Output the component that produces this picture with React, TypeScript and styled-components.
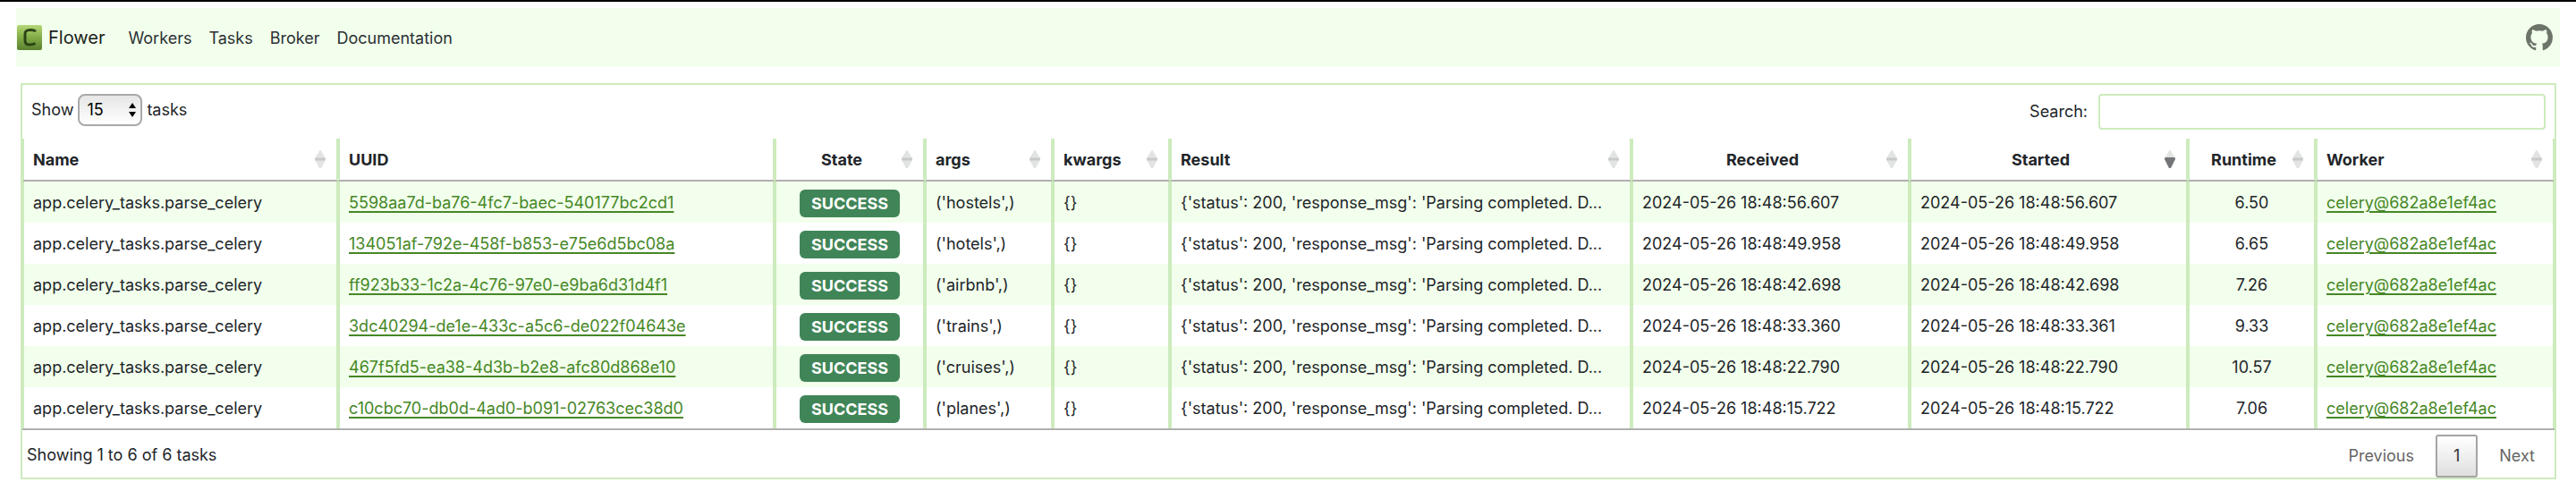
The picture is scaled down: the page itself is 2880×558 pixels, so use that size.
import React from "react";
import styled, { createGlobalStyle, css } from "styled-components";

const GlobalStyle = createGlobalStyle`
  * { box-sizing: border-box; }
  body {
    margin: 0;
    background: #fff;
    color: #212529;
    font: 18px/28px Inter, "Liberation Sans", sans-serif;
  }
  input, select, button { font: inherit; color: inherit; }
`;

const Page = styled.div`
  border-top: 2px solid #000;
  padding: 7px 18px 20px;
`;

const Navbar = styled.nav`
  display: flex;
  align-items: center;
  height: 66px;
  padding: 0 8px 0 1px;
  background: #f2ffec;
`;

const Brand = styled.a`
  display: flex;
  align-items: center;
  gap: 7px;
  margin-right: 26px;
  font-size: 20px;
  color: #1b1e21;
  text-decoration: none;
`;

const NavLinks = styled.div`
  display: flex;
  flex: 1;
  gap: 19px;
  padding-top: 2px;
`;

const NavLink = styled.a`
  color: #2b3035;
  text-decoration: none;
`;

const IconLink = styled.a`
  display: flex;
  color: #6c746a;
`;

const Panel = styled.main`
  margin: 18px 4px 0 5px;
  border: 2px solid #cdebbd;
`;

const Toolbar = styled.div`
  display: flex;
  justify-content: space-between;
  align-items: flex-start;
  padding: 10px;
`;

const LengthLabel = styled.label`
  display: flex;
  align-items: center;
  gap: 5px;
  height: 36px;
`;

const SelectBox = styled.span`
  display: flex;
  position: relative;
`;

const LengthSelect = styled.select`
  appearance: none;
  width: 72px;
  height: 36px;
  padding: 0 8px;
  border: 2px solid #a9a9a9;
  border-radius: 8px;
  background: linear-gradient(#e6e6e6, #fff);
  color: #000;
`;

const SelectArrows = styled.svg`
  position: absolute;
  right: 7px;
  top: 10px;
  pointer-events: none;
`;

const SearchLabel = styled.label`
  display: flex;
  align-items: center;
  gap: 12px;
`;

const SearchInput = styled.input`
  width: 500px;
  height: 40px;
  padding: 4px 8px;
  border: 2px solid #cdebbd;
  border-radius: 4px;
  background: #fff;
`;

const Table = styled.table`
  width: 100%;
  table-layout: fixed;
  border-spacing: 0;
  border-bottom: 2px solid #b0b0b0;
`;

const cell = css<{ $center?: boolean }>`
  padding: 2px 10px 0;
  border: solid #cdebbd;
  border-width: 0 2px;
  text-align: ${(p) => (p.$center ? "center" : "left")};
  white-space: nowrap;
  overflow: hidden;
  text-overflow: ellipsis;
`;

const HeadCell = styled.th<{ $center?: boolean }>`
  ${cell}
  height: 48px;
  border-bottom: 2px solid #b0b0b0;
  font-weight: 700;
`;

const HeadContent = styled.div`
  display: flex;
  align-items: center;
`;

const HeadText = styled.span`
  flex: 1;
`;

const SortMark = styled.svg`
  margin: 0 2px 2px 4px;
`;

const Row = styled.tr`
  &:nth-child(odd) { background: #f2ffec; }
`;

const Cell = styled.td<{ $center?: boolean }>`
  ${cell}
  height: 46px;
`;

const CellLink = styled.a`
  color: #468726;
  text-decoration: underline;
  text-decoration-thickness: 2px;
  text-underline-offset: 3px;
`;

const Badge = styled.span`
  display: inline-block;
  padding: 0 13px;
  border-radius: 6px;
  background: #408558;
  color: #fff;
  font-weight: 700;
  line-height: 31px;
  vertical-align: top;
`;

const Footer = styled.div`
  display: flex;
  justify-content: space-between;
  padding: 5px 2px 0 5px;
`;

const Info = styled.div`
  line-height: 46px;
`;

const Pager = styled.div`
  display: flex;
  gap: 4px;
`;

const PageButton = styled.button<{ $current?: boolean }>`
  height: 48px;
  padding: 0 18px;
  border: 2px solid ${(p) => (p.$current ? "#a5a5a5" : "transparent")};
  border-radius: 3px;
  background: ${(p) => (p.$current ? "linear-gradient(#fff, #dfdfdf)" : "none")};
  color: ${(p) => (p.$current ? "#333" : "#666")};
`;

type Column = { label: string; width: number; center?: boolean; sort?: "both" | "desc" };

const columns: Column[] = [
  { label: "Name", width: 353, sort: "both" },
  { label: "UUID", width: 488 },
  { label: "State", width: 168, center: true, sort: "both" },
  { label: "args", width: 143, sort: "both" },
  { label: "kwargs", width: 131, sort: "both" },
  { label: "Result", width: 516, sort: "both" },
  { label: "Received", width: 311, center: true, sort: "both" },
  { label: "Started", width: 311, center: true, sort: "desc" },
  { label: "Runtime", width: 143, center: true, sort: "both" },
  { label: "Worker", width: 267, sort: "both" },
];

const tasks = [
  ["5598aa7d-ba76-4fc7-baec-540177bc2cd1", "hostels", "18:48:56.607", "18:48:56.607", "6.50"],
  ["134051af-792e-458f-b853-e75e6d5bc08a", "hotels", "18:48:49.958", "18:48:49.958", "6.65"],
  ["ff923b33-1c2a-4c76-97e0-e9ba6d31d4f1", "airbnb", "18:48:42.698", "18:48:42.698", "7.26"],
  ["3dc40294-de1e-433c-a5c6-de022f04643e", "trains", "18:48:33.360", "18:48:33.361", "9.33"],
  ["467f5fd5-ea38-4d3b-b2e8-afc80d868e10", "cruises", "18:48:22.790", "18:48:22.790", "10.57"],
  ["c10cbc70-db0d-4ad0-b091-02763cec38d0", "planes", "18:48:15.722", "18:48:15.722", "7.06"],
];

const SortIcon = ({ kind }: { kind: "both" | "desc" }) => (
  <SortMark width="12" height="20" viewBox="0 0 12 20" aria-hidden="true">
    <path d="M5.500 0h1L12 9v2H0V9z" fill="#e2e3e3" />
    {kind === "both" ? (
      <>
        <path d="M0 9h12v2L7 20H5L0 11z" fill="#e2e3e3" />
        <path d="M.5 8.500h11L12 10l-.5 1.500H.5L0 10z" fill="#c9caca" />
      </>
    ) : (
      <path d="M.5 8h11l.5 2-5 10H5L0 10z" fill="#737578" />
    )}
  </SortMark>
);

const Logo = () => (
  <svg width="28" height="28" viewBox="0 0 28 28" aria-hidden="true">
    <defs>
      <linearGradient id="leaf" x1="0" y1="0" x2="0" y2="1">
        <stop offset="0" stopColor="#b5d878" />
        <stop offset="0.45" stopColor="#86b04a" />
        <stop offset="1" stopColor="#5a8030" />
      </linearGradient>
    </defs>
    <rect width="28" height="28" rx="2" fill="url(#leaf)" />
    <path
      d="M20.500 7.500C20 5.800 18.500 5.500 15 5.500c-4.500 0-6 1-6 4.500v7c0 3.500 1.500 5 4.500 5 3 0 5-.3 7-1.500"
      fill="none"
      stroke="#2c4415"
      strokeWidth="3"
    />
  </svg>
);

const GithubMark = () => (
  <svg width="30" height="30" viewBox="0 0 16 16" fill="currentColor" aria-hidden="true">
    <path d="M8 0C3.580 0 0 3.580 0 8c0 3.540 2.290 6.530 5.470 7.590.4.07.55-.17.55-.38 0-.19-.01-.82-.01-1.490-2.010.37-2.530-.49-2.690-.94-.09-.23-.48-.94-.82-1.130-.28-.15-.68-.52-.01-.53.63-.01 1.080.58 1.230.82.72 1.210 1.870.87 2.330.66.07-.52.28-.87.51-1.070-1.780-.2-3.640-.89-3.640-3.950 0-.87.31-1.590.82-2.150-.08-.2-.36-1.020.08-2.120 0 0 .67-.21 2.200.82.64-.18 1.320-.27 2-.27s1.360.09 2 .27c1.530-1.040 2.200-.82 2.200-.82.44 1.100.16 1.920.08 2.120.51.56.82 1.270.82 2.150 0 3.070-1.870 3.750-3.650 3.950.29.25.54.73.54 1.480 0 1.070-.01 1.930-.01 2.200 0 .21.15.46.55.38A8.010 8.010 0 0 0 16 8c0-4.420-3.580-8-8-8" />
  </svg>
);

export default function App() {
  return (
    <>
      <GlobalStyle />
      <Page>
        <Navbar>
          <Brand href="#"><Logo />Flower</Brand>
          <NavLinks>
            {["Workers", "Tasks", "Broker", "Documentation"].map((name) => (
              <NavLink key={name} href={`#${name.toLowerCase()}`}>{name}</NavLink>
            ))}
          </NavLinks>
          <IconLink href="#github" aria-label="GitHub"><GithubMark /></IconLink>
        </Navbar>
        <Panel>
          <Toolbar>
            <LengthLabel>
              Show
              <SelectBox>
                <LengthSelect defaultValue="15">
                  <option>10</option>
                  <option>15</option>
                  <option>25</option>
                </LengthSelect>
                <SelectArrows width="8" height="16" viewBox="0 0 8 16" aria-hidden="true">
                  <path d="M4 0l4 6H0zM4 16l4-6H0z" />
                </SelectArrows>
              </SelectBox>
              tasks
            </LengthLabel>
            <SearchLabel>
              Search:
              <SearchInput type="search" />
            </SearchLabel>
          </Toolbar>
          <Table>
            <colgroup>
              {columns.map((c) => <col key={c.label} width={c.width} />)}
            </colgroup>
            <thead>
              <tr>
                {columns.map((c) => (
                  <HeadCell key={c.label} $center={c.center}>
                    <HeadContent>
                      <HeadText>{c.label}</HeadText>
                      {c.sort && <SortIcon kind={c.sort} />}
                    </HeadContent>
                  </HeadCell>
                ))}
              </tr>
            </thead>
            <tbody>
              {tasks.map(([uuid, arg, received, started, runtime]) => (
                <Row key={uuid}>
                  <Cell>app.celery_tasks.parse_celery</Cell>
                  <Cell><CellLink href={`#${uuid}`}>{uuid}</CellLink></Cell>
                  <Cell $center><Badge>SUCCESS</Badge></Cell>
                  <Cell>{`('${arg}',)`}</Cell>
                  <Cell>{"{}"}</Cell>
                  <Cell>{"{'status': 200, 'response_msg': 'Parsing completed. D..."}</Cell>
                  <Cell>{`2024-05-26 ${received}`}</Cell>
                  <Cell>{`2024-05-26 ${started}`}</Cell>
                  <Cell $center>{runtime}</Cell>
                  <Cell><CellLink href="#worker">celery@682a8e1ef4ac</CellLink></Cell>
                </Row>
              ))}
            </tbody>
          </Table>
          <Footer>
            <Info>Showing 1 to 6 of 6 tasks</Info>
            <Pager>
              <PageButton>Previous</PageButton>
              <PageButton $current>1</PageButton>
              <PageButton>Next</PageButton>
            </Pager>
          </Footer>
        </Panel>
      </Page>
    </>
  );
}
